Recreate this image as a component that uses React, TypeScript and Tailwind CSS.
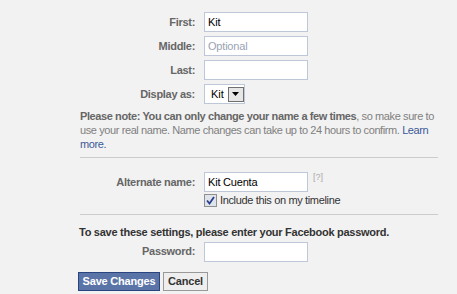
import React from "react";

function Row({ label, children }: { label: string; children: React.ReactNode }) {
  return (
    <div className="flex items-center h-[20px]">
      <div className="w-[115px] text-right font-bold text-[#666] tracking-[-0.3px]">{label}</div>
      <div className="ml-[9px] flex items-center">{children}</div>
    </div>
  );
}

function TextBox({ value, placeholder }: { value?: string; placeholder?: string }) {
  return (
    <div className="w-[104px] h-[20px] border border-[#bdc7d8] bg-white px-[3px] flex items-center tracking-[-0.2px]">
      {value ? (
        <span className="text-black">{value}</span>
      ) : (
        <span className="text-[#9aa3b3]">{placeholder}</span>
      )}
    </div>
  );
}

export default function App() {
  return (
    <div className="w-[457px] h-[294px] bg-[#f2f2f2] text-[11px] font-['Liberation_Sans',Arial,sans-serif] text-[#333] overflow-hidden">
      <div className="pl-[80px] pt-[12px]">
        <div className="flex flex-col gap-[4px]">
          <Row label="First:">
            <TextBox value="Kit" />
          </Row>
          <Row label="Middle:">
            <TextBox placeholder="Optional" />
          </Row>
          <Row label="Last:">
            <TextBox />
          </Row>
          <Row label="Display as:">
            <div className="w-[41px] h-[20px] border border-[#bdc7d8] bg-white flex items-center pl-[6px] gap-[4px]">
              <span className="text-black">Kit</span>
              <div className="w-[17px] h-[15px] border border-[#707070] bg-[#e6e6e6] flex items-center justify-center">
                <svg width="7" height="4" viewBox="0 0 7 4">
                  <path d="M0 0h7L3.5 4z" fill="#000" />
                </svg>
              </div>
            </div>
          </Row>
        </div>

        <p className="mt-[5px] w-[370px] leading-[14px] text-[#808080] whitespace-nowrap tracking-[-0.4px]">
          <span className="font-bold text-[#666]">Please note: You can only change your name a few times</span>, so make sure to
          <br />
          use your real name. Name changes can take up to 24 hours to confirm.{" "}
          <a className="text-[#3b5998]">Learn</a>
          <br />
          <a className="text-[#3b5998]">more.</a>
        </p>

        <div className="mt-[6px] w-[358px] border-t border-[#ccc]" />

        <div className="mt-[14px]">
          <Row label="Alternate name:">
            <TextBox value="Kit Cuenta" />
            <span className="ml-[5px] text-[9px] text-[#aaa] self-start -mt-[1px]">[?]</span>
          </Row>
          <div className="ml-[124px] mt-[1px] flex items-center h-[14px]">
            <div className="w-[13px] h-[13px] border border-[#8e8f8f] bg-[#dfe3ea] flex items-center justify-center">
              <svg width="9" height="9" viewBox="0 0 9 9">
                <path d="M1 4.5l2.5 3L8 1" stroke="#2a3f8f" strokeWidth="1.8" fill="none" />
              </svg>
            </div>
            <span className="ml-[3px] text-[#333] tracking-[-0.35px]">Include this on my timeline</span>
          </div>
        </div>

        <div className="mt-[7px] w-[358px] border-t border-[#ccc]" />

        <div className="mt-[9px] font-bold text-[#333] -ml-[1px] tracking-[-0.27px]">
          To save these settings, please enter your Facebook password.
        </div>

        <div className="mt-[1px]">
          <Row label="Password:">
            <TextBox />
          </Row>
        </div>

        <div className="mt-[10px] -ml-[2px] flex gap-[3px]">
          <button className="h-[19px] w-[82px] bg-[#5b74a8] border border-[#29447e] text-white font-bold flex items-center justify-center tracking-[-0.2px]">
            Save Changes
          </button>
          <button className="h-[19px] w-[45px] bg-[#eeeeee] border border-[#999] text-[#333] font-bold flex items-center justify-center tracking-[-0.2px]">
            Cancel
          </button>
        </div>
      </div>
    </div>
  );
}
